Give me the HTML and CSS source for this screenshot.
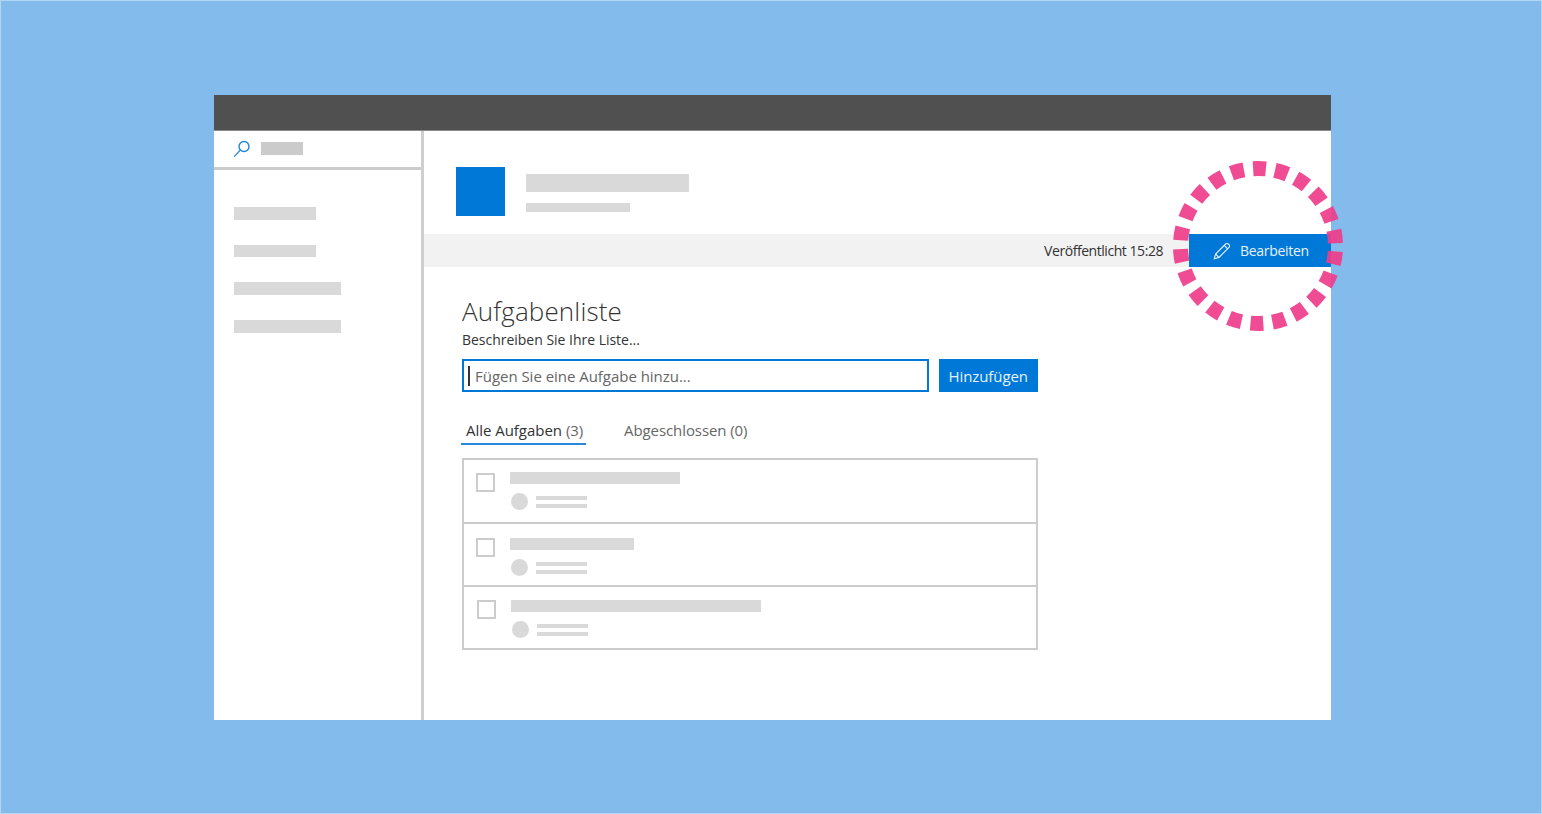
FILE: index.html
```html
<!DOCTYPE html>
<html lang="de">
<head>
<meta charset="utf-8">
<title>Aufgabenliste</title>
<link rel="stylesheet" href="styles.css">
</head>
<body>
<div class="window">
  <div class="topbar"></div>
  <div class="shell">
    <aside class="sidebar">
      <div class="search">
        <svg class="search-icon" width="18" height="18" viewBox="0 0 18 18" fill="none" stroke="#1f86dc"><circle cx="11" cy="6.5" r="5" stroke-width="1.4"/><path d="M7.4 10 1.2 16.6" stroke-width="1.2"/></svg>
        <span class="bar search-bar"></span>
      </div>
      <nav class="nav">
        <span class="bar nav-short"></span>
        <span class="bar nav-short"></span>
        <span class="bar nav-long"></span>
        <span class="bar nav-long"></span>
      </nav>
    </aside>
    <main class="main">
      <header class="site-head">
        <div class="logo"></div>
        <div class="head-lines">
          <span class="bar head-title"></span>
          <span class="bar head-sub"></span>
        </div>
      </header>
      <div class="status">
        <span class="published">Veröffentlicht 15:28</span>
        <button class="edit-btn">
          <svg width="18" height="18" viewBox="0 0 18 18" fill="none" stroke="#e6f1fb" stroke-width="1.1"><path d="M1.2 16.8 2.6 12 12.6 2a1.9 1.9 0 0 1 2.7 0l.7.7a1.9 1.9 0 0 1 0 2.7L6 15.4z"/><path d="M2.6 12 6 15.4M11.2 3.4l3.4 3.4"/></svg>
          <span>Bearbeiten</span>
        </button>
      </div>
      <section class="content">
        <h1 class="title">Aufgabenliste</h1>
        <p class="desc">Beschreiben Sie Ihre Liste...</p>
        <div class="add-row">
          <div class="input"><i class="caret"></i><span>Fügen Sie eine Aufgabe hinzu...</span></div>
          <button class="add-btn">Hinzufügen</button>
        </div>
        <div class="tabs">
          <span class="tab active">Alle Aufgaben <em>(3)</em></span>
          <span class="tab">Abgeschlossen (0)</span>
        </div>
        <div class="list">
          <div class="row row-a">
            <span class="check"></span>
            <div class="row-body">
              <span class="bar row-title t1"></span>
              <div class="meta"><span class="dot"></span><div class="meta-lines"><span class="bar"></span><span class="bar"></span></div></div>
            </div>
          </div>
          <div class="row row-b">
            <span class="check"></span>
            <div class="row-body">
              <span class="bar row-title t2"></span>
              <div class="meta"><span class="dot"></span><div class="meta-lines"><span class="bar"></span><span class="bar"></span></div></div>
            </div>
          </div>
          <div class="row row-c">
            <span class="check"></span>
            <div class="row-body">
              <span class="bar row-title t3"></span>
              <div class="meta"><span class="dot"></span><div class="meta-lines"><span class="bar"></span><span class="bar"></span></div></div>
            </div>
          </div>
        </div>
      </section>
    </main>
  </div>
  <svg class="ring" width="180" height="180" viewBox="0 0 180 180" fill="none"><circle cx="90" cy="90" r="77.5" stroke="#ee3d8b" stroke-opacity=".92" stroke-width="15" stroke-dasharray="13 9.133" stroke-dashoffset="-5.5"/></svg>
</div>
</body>
</html>
```
FILE: styles.css
```css
* { box-sizing: border-box; }
html, body { margin: 0; height: 100%; }
body {
  width: 1542px;
  height: 814px;
  overflow: hidden;
  background: #83bcec;
  border: 1px solid #b4d6f3;
  padding: 94px 210px 93px 213px;
  font-family: "Open Sans", "Noto Sans", sans-serif;
  color: #333;
}
.window { position: relative; width: 1117px; height: 625px; background: #fff; display: flex; flex-direction: column; }
.topbar { height: 36px; background: #505050; flex: none; border-bottom: 1px solid #8c8c8c; }
.shell { flex: 1; display: flex; min-height: 0; }
.bar { display: block; background: #d9d9d9; }
.sidebar { width: 210px; flex: none; border-right: 3px solid #cfcfcf; }
.search { height: 39px; display: flex; align-items: center; padding: 0 0 2px 19px; gap: 10px; border-bottom: 3px solid #cccccc; }
.search-icon { flex: none; margin-top: 1px; }
.search-bar { width: 42px; height: 13px; background: #cbcbcb; }
.nav { display: flex; flex-direction: column; gap: 25.2px; padding: 37px 0 0 20px; }
.nav .bar { height: 12.5px; }
.nav-short { width: 82px; }
.nav-long { width: 107px; }
.main { flex: 1; min-width: 0; display: flex; flex-direction: column; }
.site-head { display: flex; height: 103px; padding: 36px 0 0 32px; gap: 20.5px; flex: none; }
.logo { width: 49px; height: 49px; background: #0078d7; }
.head-lines { padding-top: 7px; }
.head-title { width: 163px; height: 18px; }
.head-sub { width: 104px; height: 9px; margin-top: 11px; }
.status { height: 33px; background: #f2f2f2; display: flex; justify-content: flex-end; align-items: center; flex: none; }
.published { font-size: 14px; color: #333; margin-right: 26px; letter-spacing: -.45px; }
.edit-btn { width: 142px; height: 33px; border: 0; background: #0078d7; color: #e6f1fb; display: flex; align-items: center; padding: 0 0 0 24px; gap: 9px; font: inherit; font-size: 14px; letter-spacing: -.3px; }
.content { padding: 26px 0 0 38px; width: 614px; }
.title { margin: 0; font-size: 26px; line-height: 36px; font-weight: 300; color: #333; letter-spacing: .15px; }
.desc { margin: 1px 0 0; font-size: 14px; line-height: 19px; color: #333; letter-spacing: -.02px; }
.add-row { display: flex; gap: 10px; margin-top: 10px; height: 33px; }
.input { width: 467px; border: 2px solid #0078d7; display: flex; align-items: center; padding-left: 4px; font-size: 15px; color: #666; letter-spacing: -.03px; }
.caret { width: 2px; height: 20px; background: #333; margin-right: 5px; flex: none; }
.add-btn { width: 98.5px; border: 0; padding: 0; background: #0078d7; color: #e6f1fb; font: inherit; font-size: 15px; letter-spacing: -.1px; }
.tabs { display: flex; gap: 35px; margin: 25px 0 0 -1px; height: 28px; }
.tab { font-size: 15px; line-height: 27px; color: #666; padding: 0 3px; letter-spacing: -.08px; }
.tab.active { color: #333; width: 125px; padding: 0 0 0 5px; border-bottom: 2px solid #2b88d8; white-space: nowrap; letter-spacing: -.03px; }
.tab em { font-style: normal; color: #666; }
.list { margin-top: 13px; border: 2px solid #cccccc; height: 192px; width: 575.5px; }
.row { display: flex; padding-left: 12px; gap: 15px; }
.row + .row { border-top: 2px solid #cccccc; }
.row-a { height: 62px; padding-top: 12px; }
.row-b { height: 63px; padding-top: 14px; }
.row-c { height: 63px; padding-top: 13px; padding-left: 13px; }
.check { width: 19px; height: 19px; border: 2px solid #cccccc; flex: none; }
.row-a .check { margin-top: 1px; }
.row-title { height: 12px; }
.t1 { width: 170px; }
.t2 { width: 124px; }
.t3 { width: 250px; }
.meta { display: flex; align-items: center; gap: 8px; margin: 9px 0 0 1px; }
.dot { width: 17px; height: 17px; border-radius: 50%; background: #d9d9d9; flex: none; }
.meta-lines { width: 51px; display: flex; flex-direction: column; gap: 4px; }
.meta-lines .bar { height: 4px; }
.ring { position: absolute; left: 954px; top: 61px; pointer-events: none; }
```
